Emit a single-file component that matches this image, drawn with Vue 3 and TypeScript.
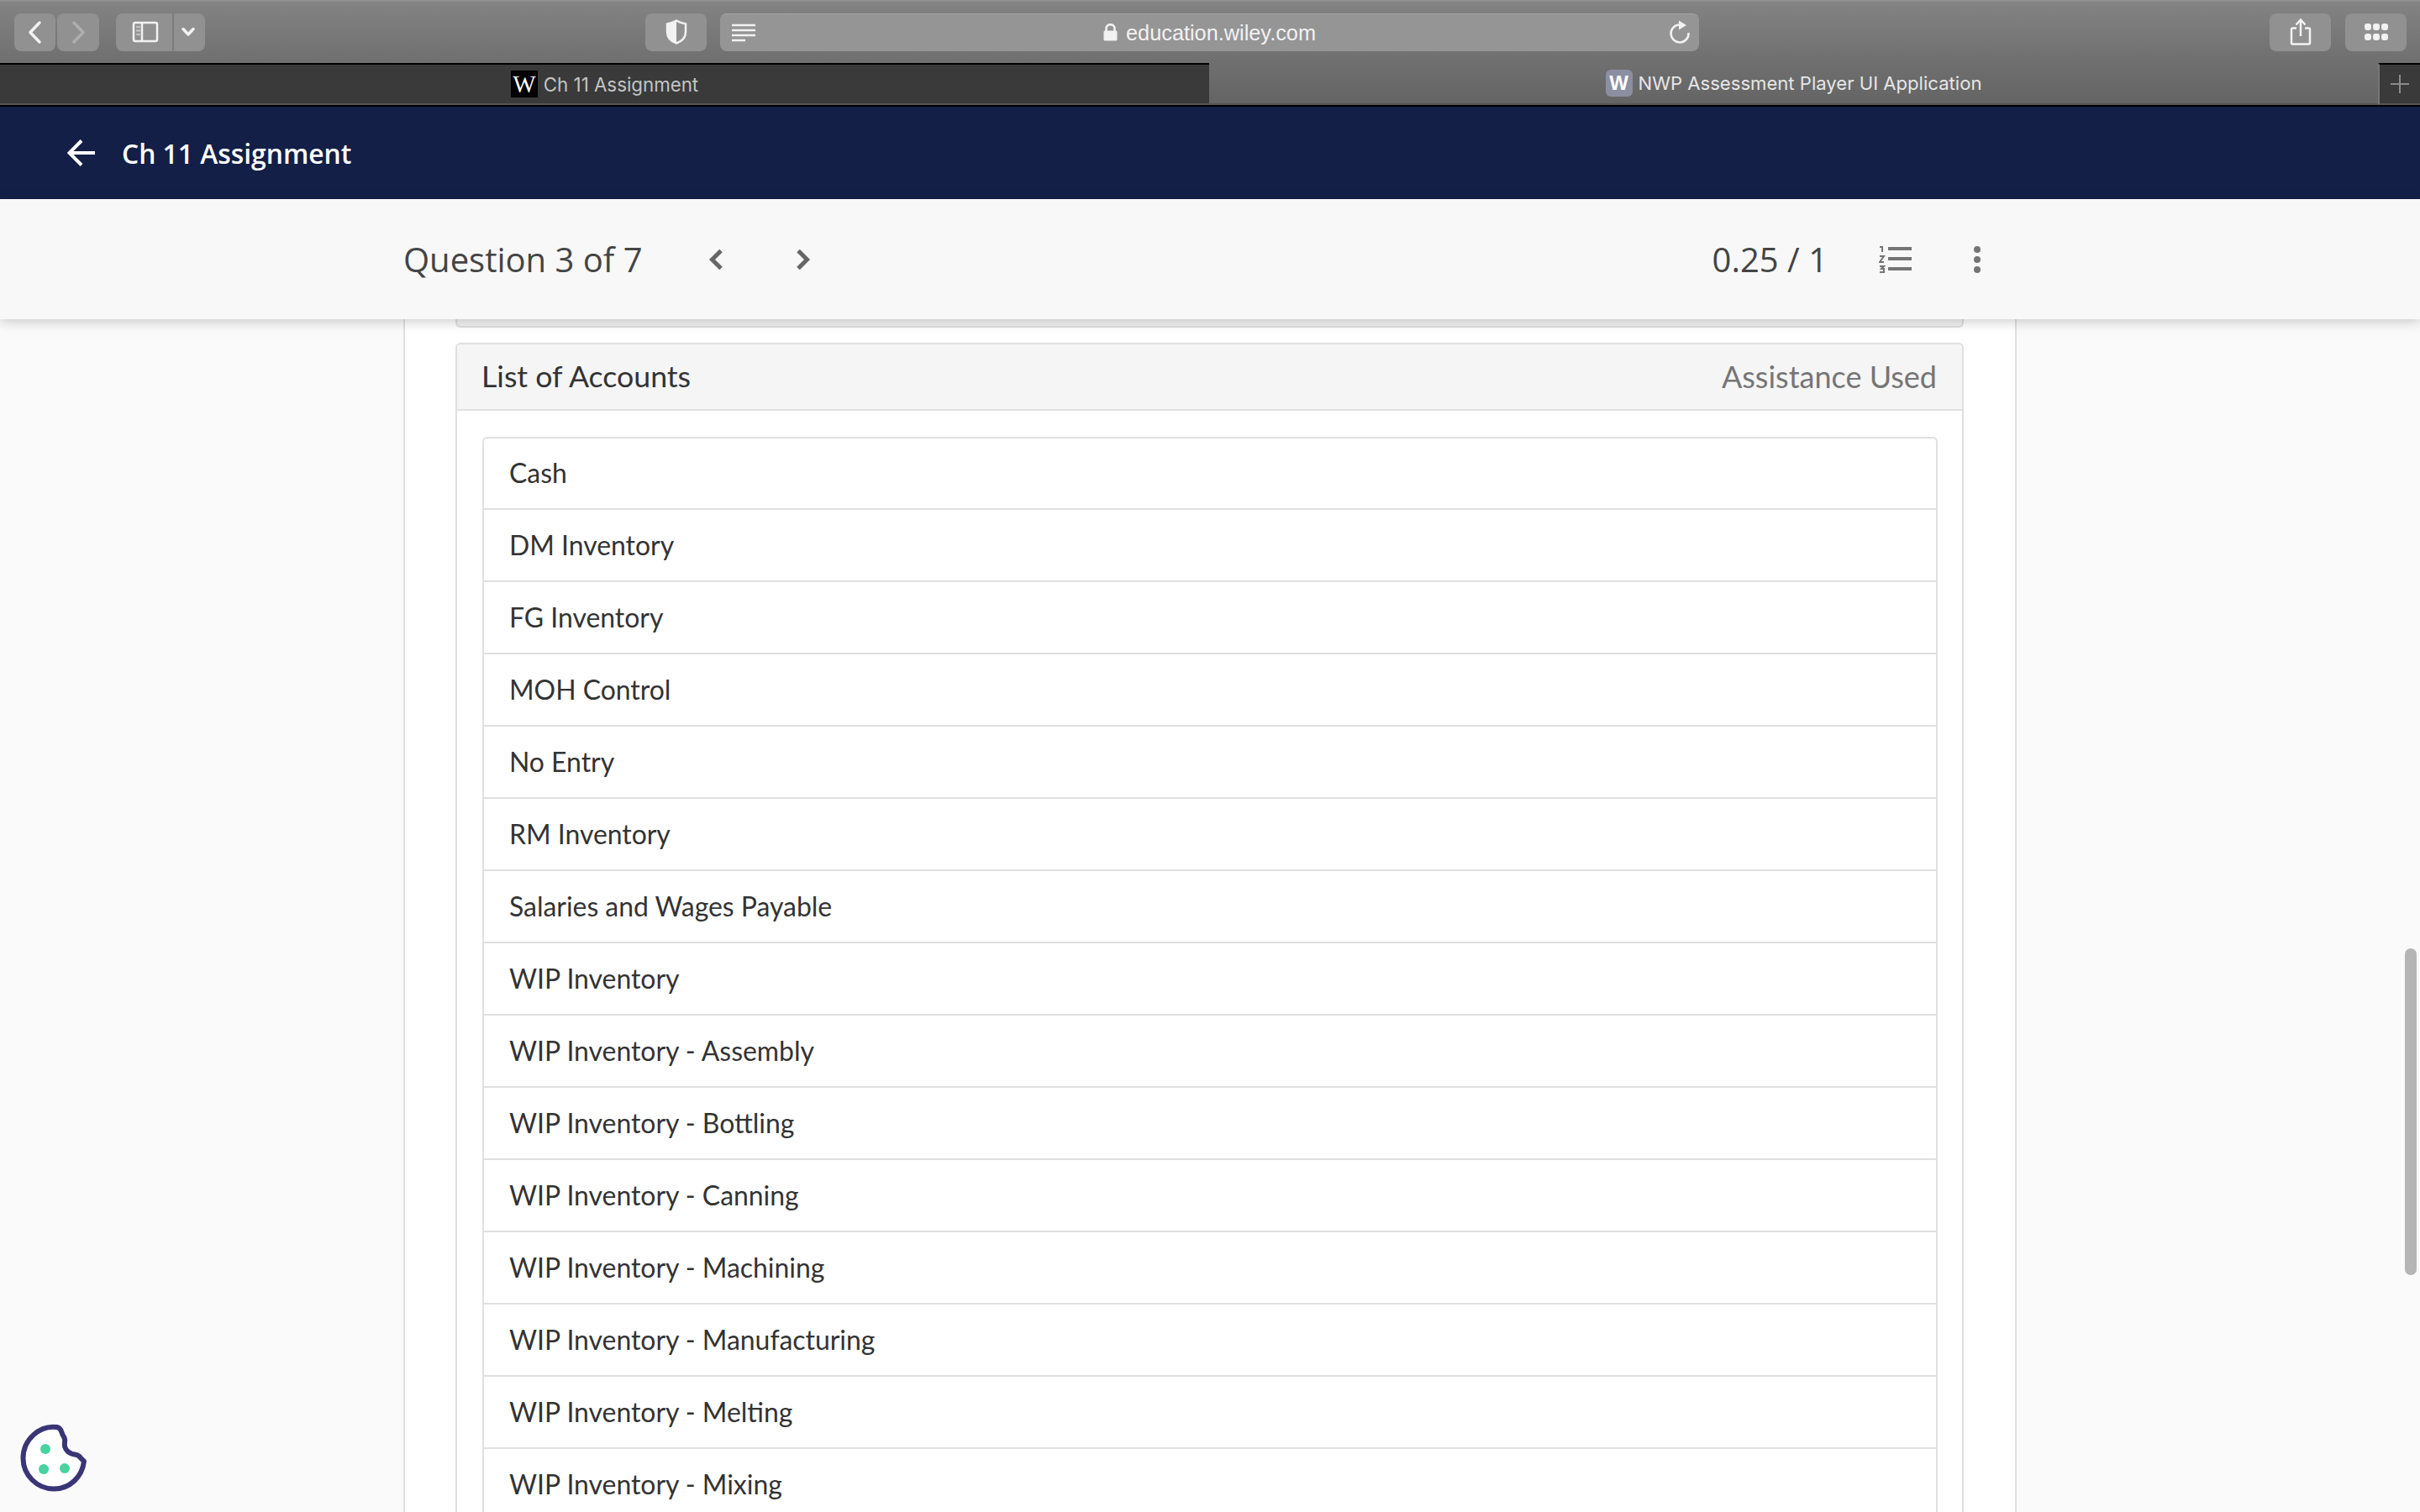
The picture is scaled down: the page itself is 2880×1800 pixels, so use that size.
<script setup lang="ts">
const accounts: string[] = [
  'Cash', 'DM Inventory', 'FG Inventory', 'MOH Control', 'No Entry', 'RM Inventory',
  'Salaries and Wages Payable', 'WIP Inventory', 'WIP Inventory - Assembly',
  'WIP Inventory - Bottling', 'WIP Inventory - Canning', 'WIP Inventory - Machining',
  'WIP Inventory - Manufacturing', 'WIP Inventory - Melting', 'WIP Inventory - Mixing',
]
</script>

<template>
  <div class="page">
    <div class="toolbar">
      <div class="btn back">
        <svg width="49" height="44" viewBox="0 0 49 44"><path d="M30 11 L19 22.5 L30 34" class="ic" /></svg>
      </div>
      <div class="btn fwd">
        <svg width="50" height="44" viewBox="0 0 50 44"><path d="M20 11 L31 22.5 L20 34" class="ic dim" /></svg>
      </div>
      <div class="btn side">
        <div class="side-main">
          <svg width="32" height="26" viewBox="0 0 32 26">
            <rect x="2" y="2" width="28" height="22" rx="2" class="ic thin" />
            <path d="M12 2 V24" class="ic thin" />
            <path d="M5 7 H10 M5 11.500 H10 M5 16 H10" class="ic thin faint" />
          </svg>
        </div>
        <div class="side-more">
          <svg width="16" height="10" viewBox="0 0 16 10"><path d="M2 1.500 L8 8 L14 1.500" class="ic" /></svg>
        </div>
      </div>
      <div class="btn shield">
        <svg width="26" height="30" viewBox="0 0 26 30">
          <path d="M13 1.500 C9 4 5.500 4.500 2 5.500 V15 C2 21 6 26 13 28.500 C20 26 24 21 24 15 V5.500 C20.500 4.500 17 4 13 1.500 Z" class="ic thin" />
          <path d="M13 1.500 C9 4 5.500 4.500 2 5.500 V15 C2 21 6 26 13 28.500 Z" class="solid" />
        </svg>
      </div>
      <div class="url">
        <svg class="reader" width="28" height="22" viewBox="0 0 28 22">
          <path d="M0 2 H28 M0 8 H28 M0 14 H28 M0 20 H16" class="ic thin" />
        </svg>
        <div class="url-center">
          <svg width="17" height="21" viewBox="0 0 17 21">
            <path d="M3.500 9 V6 C3.500 -0.500 13.500 -0.500 13.500 6 V9" class="ic thin" />
            <rect x="0.500" y="8.500" width="16" height="12" rx="1.500" class="solid" />
          </svg>
          <span class="url-text">education.wiley.com</span>
        </div>
        <svg class="reload" width="26" height="30" viewBox="0 0 26 30">
          <path d="M12 5.500 A10.500 10.500 0 1 0 23.500 15" class="ic thin" />
          <path d="M12 0.500 L21 6 L12 11.500 Z" class="solid" />
        </svg>
      </div>
      <div class="btn share">
        <svg width="26" height="32" viewBox="0 0 26 32">
          <path d="M8 11.500 H3.500 Q2 11.500 2 13 V29 Q2 30.500 3.500 30.500 H22.500 Q24 30.500 24 29 V13 Q24 11.500 22.500 11.500 H18" class="ic thin" />
          <path d="M13 21 V2 M7.500 7.500 L13 1.500 L18.500 7.500" class="ic thin" />
        </svg>
      </div>
      <div class="btn grid-btn">
        <div class="tiles">
          <i v-for="n in 6" :key="n"></i>
        </div>
      </div>
    </div>

    <div class="tabs">
      <div class="tab active">
        <span class="fav black">W</span>
        <span class="tab-text first">Ch 11 Assignment</span>
      </div>
      <div class="tab other">
        <span class="fav lilac">W</span>
        <span class="tab-text">NWP Assessment Player UI Application</span>
      </div>
      <div class="tab plus">
        <svg width="24" height="24" viewBox="0 0 24 24"><path d="M12 1 V23 M1 12 H23" class="plus-ic" /></svg>
      </div>
    </div>

    <header class="navy">
      <svg class="arrow" width="34" height="34" viewBox="0 0 34 34">
        <path d="M33 17 H3 M17 2.500 L2.500 17 L17 31.500" class="arrow-ic" />
      </svg>
      <span class="navy-title">Ch 11 Assignment</span>
    </header>

    <div class="qbar">
      <span class="qtitle">Question 3 of 7</span>
      <svg class="prev" width="18" height="26" viewBox="0 0 18 26"><path d="M15 2.500 L4.500 13 L15 23.500" class="chev" /></svg>
      <svg class="next" width="18" height="26" viewBox="0 0 18 26"><path d="M3 2.500 L13.500 13 L3 23.500" class="chev" /></svg>
      <span class="score">0.25 / 1</span>
      <svg class="list-ic" width="40" height="34" viewBox="0 0 40 34">
        <path d="M11 4 H39 M11 16 H39 M11 28 H39" class="lines" />
        <path d="M1 2 H4 V8 M1 13 H6 L1 20 H6 M1 25 H6 L3 28 H6 V32 H1" class="nums" />
      </svg>
      <div class="dots"><i></i><i></i><i></i></div>
    </div>

    <main class="main">
      <div class="column">
        <div class="stub"></div>
        <section class="panel">
          <div class="panel-head">
            <span class="panel-title">List of Accounts</span>
            <span class="panel-note">Assistance Used</span>
          </div>
          <div class="panel-body">
            <ul class="rows">
              <li v-for="a in accounts" :key="a" class="row">{{ a }}</li>
            </ul>
          </div>
        </section>
      </div>
    </main>

    <div class="scrollbar"></div>

    <svg class="cookie" width="90" height="90" viewBox="20 1690 90 90">
      <path d="M68 1699 C47 1696 27.500 1714 27.500 1736 C27.500 1756 44 1772.500 64 1772.500 C83 1772.500 98 1758 100 1739.500 C97 1737.500 96 1735 94 1733.500 C91 1731 89 1732 85 1730.500 C79 1728 76 1723 77 1717 C78 1712 76 1711 74.500 1708 C73 1705 73 1700 68 1699 Z" class="cookie-line" />
      <circle cx="54" cy="1725" r="6" class="cookie-dot" />
      <circle cx="52" cy="1749" r="6" class="cookie-dot" />
      <circle cx="77" cy="1748" r="6" class="cookie-dot" />
    </svg>
  </div>
</template>

<style scoped>
.page {
  position: relative;
  width: 2880px;
  height: 1800px;
  overflow: hidden;
  display: flex;
  flex-direction: column;
  background: #fafafa;
  font-family: "Lato", sans-serif;
}
.toolbar {
  flex: none;
  height: 75px;
  box-sizing: border-box;
  padding: 14px 0 0 16.500px;
  display: flex;
  align-items: flex-start;
  background: linear-gradient(#838383, #6f6f6f);
  border-top: 2px solid #8f8f8f;
}
.btn {
  height: 44.500px;
  background: #919191;
  border-radius: 8px;
  display: flex;
  align-items: center;
  justify-content: center;
  flex: none;
}
.back { width: 49px; }
.fwd { width: 50px; margin-left: 2.500px; }
.side { width: 106px; margin-left: 20px; }
.side-main { width: 69px; height: 100%; display: flex; align-items: center; justify-content: center; border-right: 2px solid #7c7c7c; box-sizing: border-box; padding-left: 2px; }
.side-more { flex: 1; display: flex; justify-content: center; padding-right: 4px; }
.shield { width: 73px; margin-left: 524px; }
.url {
  position: relative;
  width: 1165px;
  height: 44.500px;
  margin-left: 16px;
  flex: none;
  background: #959595;
  border-top: 1px solid #a6a6a6;
  box-sizing: border-box;
  border-radius: 8px;
  display: flex;
  align-items: center;
  justify-content: space-between;
  padding: 0 10px 0 14px;
}
.url-center {
  position: absolute;
  left: 0;
  right: 0;
  top: 0;
  bottom: 0;
  display: flex;
  align-items: center;
  justify-content: center;
  gap: 10px;
}
.url-text {
  font-family: "Liberation Sans", sans-serif;
  font-size: 25.300px;
  color: #f2f2f2;
  padding-top: 1px;
}
.share { width: 73px; margin-left: 679px; }
.grid-btn { width: 73px; margin-left: 17px; }
.tiles { display: grid; grid-template-columns: repeat(3, 8px); grid-auto-rows: 8px; gap: 4px 2px; }
.tiles i { background: #f2f2f2; border-radius: 3px; }
.ic { fill: none; stroke: #f2f2f2; stroke-width: 3.500; stroke-linecap: round; stroke-linejoin: round; }
.ic.thin { stroke-width: 2.500; stroke-linecap: butt; stroke-linejoin: miter; }
.ic.dim { stroke: #aeaeae; }
.ic.faint { stroke: #c0c0c0; }
.solid { fill: #f2f2f2; }

.tabs {
  flex: none;
  height: 52px;
  display: flex;
  background: linear-gradient(#6f6f6f, #646464);
  border-bottom: 2px solid #000;
  box-sizing: border-box;
}
.tab { display: flex; align-items: center; justify-content: center; height: 50px; box-sizing: border-box; }
.tab.active { width: 1439px; background: #3a3a3a; border-top: 2px solid #000; border-bottom: 2px solid #555; gap: 7px; }
.tab.other { width: 1391px; gap: 7px; border-bottom: 2px solid #555; }
.tab.plus { width: 50px; background: #3a3a3a; border-top: 2px solid #000; border-left: 2px solid #777; border-bottom: 2px solid #555; }
.fav {
  width: 32px;
  height: 32px;
  display: flex;
  align-items: center;
  justify-content: center;
  color: #fff;
  flex: none;
}
.fav.black { background: #000; font-family: "Liberation Serif", serif; font-size: 29px; }
.fav.lilac { background: #8c8ea2; border-radius: 6px; font-family: "Liberation Sans", sans-serif; font-weight: 700; font-size: 24px; }
.tab-text { font-family: "Inter", "Liberation Sans", sans-serif; font-size: 22.100px; color: #e6e6e6; white-space: nowrap; }
.tab-text.first { font-size: 22.300px; color: #c4c4c4; }
.plus-ic { fill: none; stroke: #8a8a8a; stroke-width: 2; }

.navy {
  flex: none;
  height: 110px;
  background: #131f47;
  display: flex;
  align-items: center;
  padding-left: 80px;
  box-sizing: border-box;
  color: #fff;
}
.arrow { flex: none; }
.arrow-ic { fill: none; stroke: #fff; stroke-width: 4; }
.navy-title {
  margin-left: 31px;
  font-family: "Open Sans", sans-serif;
  font-size: 31.800px;
  font-weight: 600;
}

.qbar {
  position: relative;
  z-index: 2;
  flex: none;
  height: 143px;
  background: #f8f8f8;
  box-shadow: 0 3px 14px rgba(0, 0, 0, 0.2);
  display: flex;
  align-items: center;
  padding-left: 480px;
  box-sizing: border-box;
}
.qtitle, .score {
  font-family: "Open Sans", sans-serif;
  font-size: 40px;
  color: #444;
  white-space: nowrap;
}
.prev { margin-left: 78px; flex: none; margin-top: 1px; }
.next { margin-left: 86px; flex: none; margin-top: 1px; }
.score { margin-left: 1073px; }
.list-ic { margin-left: 61px; flex: none; margin-top: 1px; }
.chev { fill: none; stroke: #666; stroke-width: 5; }
.lines { fill: none; stroke: #757575; stroke-width: 4; }
.nums { fill: none; stroke: #757575; stroke-width: 2; }
.dots { margin-left: 73px; margin-top: 1px; display: flex; flex-direction: column; gap: 4px; }
.dots i { width: 8px; height: 8px; border-radius: 50%; background: #757575; }

.main { flex: 1; min-height: 0; padding-left: 480px; overflow: hidden; }
.column {
  width: 1920px;
  height: 100%;
  box-sizing: border-box;
  background: #fff;
  border-left: 2px solid #e0e0e0;
  border-right: 2px solid #e0e0e0;
  padding: 0 61px 0 60px;
}
.stub {
  height: 10px;
  background: #f4f4f4;
  border: 2px solid #dedede;
  border-top: none;
  border-radius: 0 0 6px 6px;
  box-sizing: border-box;
}
.panel {
  margin-top: 18px;
  border: 2px solid #e0e0e0;
  border-radius: 6px 6px 0 0;
}
.panel-head {
  height: 79px;
  box-sizing: border-box;
  background: #f5f5f5;
  border-bottom: 2px solid #e0e0e0;
  display: flex;
  align-items: center;
  justify-content: space-between;
  padding: 0 30px 2px 29px;
  border-radius: 5px 5px 0 0;
}
.panel-title { font-size: 35.700px; color: #333; }
.panel-note { font-size: 36px; color: #757575; }
.panel-body { padding: 31px 29px 0 30px; background: #fff; }
.rows { list-style: none; margin: 0; padding: 0; }
.row {
  height: 86px;
  box-sizing: border-box;
  border: 2px solid #e0e0e0;
  border-top: none;
  padding: 0 0 1px 30px;
  display: flex;
  align-items: center;
  font-size: 31.900px;
  color: #333;
}
.row:first-child { height: 87px; padding-bottom: 2px; border-top: 2px solid #e0e0e0; border-radius: 6px 6px 0 0; }

.scrollbar {
  position: absolute;
  left: 2862px;
  top: 1129px;
  width: 14px;
  height: 389px;
  border-radius: 7px;
  background: #b5b5b5;
}
.cookie { position: absolute; left: 20px; top: 1690px; }
.cookie-line { fill: #fff; stroke: #3a3576; stroke-width: 6; stroke-linejoin: round; }
.cookie-dot { fill: #48d3a0; }
</style>
